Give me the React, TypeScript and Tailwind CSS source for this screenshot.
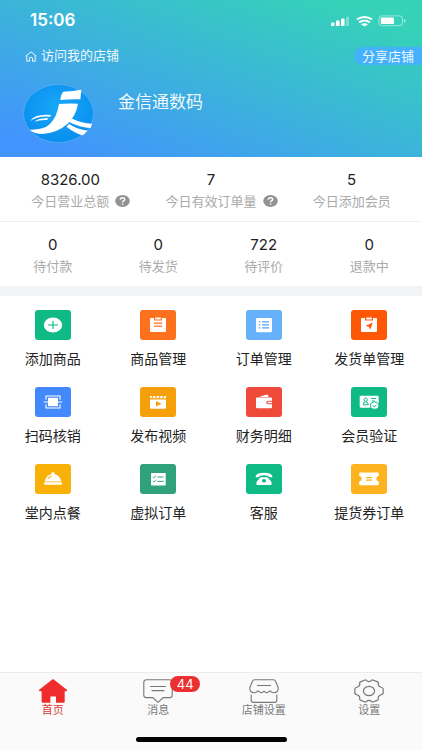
import type { ReactNode } from 'react';
import clsx from 'clsx';

const totals = [
  { value: '8326.00', label: '今日营业总额', help: true },
  { value: '7', label: '今日有效订单量', help: true },
  { value: '5', label: '今日添加会员', help: false },
];

const orders = [
  { value: '0', label: '待付款' },
  { value: '0', label: '待发货' },
  { value: '722', label: '待评价' },
  { value: '0', label: '退款中' },
];

const clipboard = (
  <path d="M11 8h3v2.6h8V8h3q1 0 1 1v12q0 1-1 1H11q-1 0-1-1V9q0-1 1-1zM15.2 7.6h5.6v1.8h-5.6z" fill="#fff" />
);

const actions: { label: string; color: string; icon: ReactNode }[] = [
  {
    label: '添加商品',
    color: 'bg-[#0fba85]',
    icon: (
      <>
        <ellipse cx="18" cy="15" rx="9.2" ry="7.6" fill="#fff" />
        <path d="M13 15h10M18 11v8" stroke="#0fba85" strokeWidth="1.2" />
      </>
    ),
  },
  {
    label: '商品管理',
    color: 'bg-[#fd701e]',
    icon: (
      <>
        {clipboard}
        <path d="M13.8 13.2h8.4M13.8 16.2h8.4" stroke="#fd701e" strokeWidth="1.2" />
      </>
    ),
  },
  {
    label: '订单管理',
    color: 'bg-[#66b0fc]',
    icon: (
      <>
        <rect x="10" y="8" width="16" height="14.3" rx="1.2" fill="#fff" />
        <path d="M12.8 11.8h1.6M12.8 14.8h1.6M12.8 17.8h1.6M16 11.8h7M16 14.8h7M16 17.8h7" stroke="#5aa5f5" strokeWidth="1.2" />
      </>
    ),
  },
  {
    label: '发货单管理',
    color: 'bg-[#fe5705]',
    icon: (
      <>
        {clipboard}
        <path d="M21.8 12.6 14.4 16l3.4.7 1.4 3z" fill="#fe5705" />
      </>
    ),
  },
  {
    label: '扫码核销',
    color: 'bg-[#4389fd]',
    icon: (
      <>
        <rect x="13" y="10.8" width="10" height="8.4" fill="#fff" />
        <path d="M11 12.8V9h14v3.8M11 17.2V21h14v-3.8M8.8 15h18.4" fill="none" stroke="#fff" strokeWidth="1.1" />
      </>
    ),
  },
  {
    label: '发布视频',
    color: 'bg-[#f59f0a]',
    icon: (
      <>
        <path d="M10 12.4h16v8.4q0 1-1 1H11q-1 0-1-1z" fill="#fff" />
        <path d="M10 9h2.4l-1.2 2.2H10zM13.6 9H16l-1.3 2.2h-2.4zM17.2 9h2.4l-1.3 2.2h-2.4zM20.8 9h2.4l-1.3 2.2h-2.4zM24.4 9H26v2.2h-2.9z" fill="#fff" />
        <path d="m16 14 5.6 2.8-5.6 2.8z" fill="#f59f0a" />
      </>
    ),
  },
  {
    label: '财务明细',
    color: 'bg-[#f04a3b]',
    icon: (
      <>
        <path d="M14.5 9.6 20.5 7.6q1-.2 1.5.7l.8 1.6h-9z" fill="#fff" />
        <path d="M11.2 10.4H25q1 0 1 1v2.4h-3.8q-2 0-2 1.7t2 1.7H26V20q0 1.2-1.2 1.2H11.2Q10 21.2 10 20v-8.4q0-1.2 1.2-1.2z" fill="#fff" />
        <path d="M22.4 14.7H26v1.6h-3.6q-.9 0-.9-.8t.9-.8z" fill="#fff" />
      </>
    ),
  },
  {
    label: '会员验证',
    color: 'bg-[#0fba85]',
    icon: (
      <>
        <rect x="8.7" y="8.7" width="19" height="12" rx="1.2" fill="#fff" />
        <ellipse cx="14.7" cy="12.7" rx="1.7" ry="1.7" fill="none" stroke="#0fba85" />
        <path d="M12.2 17.8q-.2-3 2.500-3t2.500 3zM20 11.500h5M20.800 14h3" fill="none" stroke="#0fba85" />
        <ellipse cx="23.600" cy="18.600" rx="4.200" ry="3.600" fill="#fff" stroke="#0fba85" />
        <path d="m21.800 18.600 1.400 1.200 2.400-2.200" fill="none" stroke="#0fba85" />
      </>
    ),
  },
  {
    label: '堂内点餐',
    color: 'bg-[#f9b108]',
    icon: (
      <>
        <ellipse cx="18" cy="9.4" rx="1.6" ry="1.2" fill="#fff" />
        <path d="M9.6 17.600Q11.500 10 18 10t8.400 7.600z" fill="#fff" />
        <rect x="9" y="18.300" width="18" height="2.400" rx="1" fill="#fff" />
        <path d="M13 14.600q1-1.800 3-2.400" fill="none" stroke="#f9b108" strokeWidth="1.1" strokeLinecap="round" />
      </>
    ),
  },
  {
    label: '虚拟订单',
    color: 'bg-[#30a27b]',
    icon: (
      <>
        <rect x="11" y="9" width="14.7" height="12.4" rx=".6" fill="#fff" />
        <path d="m12.800 12.800 1 .9 2-1.800M12.800 17.200l1 .9 2-1.800M17.400 13h6.200M17.400 17.400h6.200" fill="none" stroke="#30a27b" />
      </>
    ),
  },
  {
    label: '客服',
    color: 'bg-[#0fba85]',
    icon: (
      <>
        <path d="M9.600 12.200Q10.500 8.800 18 8.800t8.400 3.400q.2 1.200-.8 1.300l-2.400-.4q-.8-.2-.8-1.200-4.400-1.400-8.800 0 0 1-.8 1.200l-2.400.4q-1-.1-.8-1.300z" fill="#fff" />
        <path d="M14.600 13.300h6.800l3.800 4.200q.4.600.4 1.500v1q0 1-1 1H11.400q-1 0-1-1v-1q0-.9.400-1.500z" fill="#fff" />
        <ellipse cx="18" cy="16.700" rx="2.100" ry="1.700" fill="#0fba85" />
      </>
    ),
  },
  {
    label: '提货券订单',
    color: 'bg-[#fdb21f]',
    icon: (
      <>
        <path d="M9.500 8.400h17q1.300 0 1.300 1.200v2.200q-2.600.9-2.600 3t2.600 3V20q0 1.200-1.300 1.200h-17Q8.200 21.200 8.200 20v-2.200q2.600-.9 2.600-3t-2.600-3V9.600q0-1.200 1.300-1.200z" fill="#fff" />
        <path d="M15 13.600h6M15 16.200h6" stroke="#fdb21f" strokeWidth="1.2" />
      </>
    ),
  },
];

const tabs: { label: string; badge?: string; active?: boolean; icon: ReactNode }[] = [
  {
    label: '首页',
    active: true,
    icon: (
      <path
        d="M14.200.6q.8-.6 1.600 0l13 10.200q.8 1-.4 1.400H26.700v10.600q0 1-1.200 1H18v-6.400h-5.600v6.400H4.800q-1.200 0-1.200-1V12.200h-2Q.4 11.800 1.200 10.800z"
        fill="#f02b2b"
      />
    ),
  },
  {
    label: '消息',
    badge: '44',
    icon: (
      <g fill="none" stroke="#77777b" strokeWidth="1.1" strokeLinecap="round">
        <path d="M3.500.8h23q2.700 0 2.700 2.400v13q0 2.400-2.700 2.400h-6.300L15 23.400l-5.200-4.800H3.500Q.8 18.600.8 16.200v-13Q.8.800 3.500.8z" />
        <path d="M7.500 7.500h15M9 11.600h12" />
      </g>
    ),
  },
  {
    label: '店铺设置',
    icon: (
      <g fill="none" stroke="#77777b" strokeWidth="1.1" strokeLinecap="round">
        <path d="M5.500.8h19q1.300 0 1.900 1.200l2.800 6.500q.3 5-4.200 5.200-2.600 0-4-1.800-2.200 1.800-3.400 1.800T15 12.200q-1.400 1.500-2.600 1.500T9 11.900q-1.400 1.800-4 1.800Q.5 13.500.8 8.500L3.600 2Q4.200.8 5.500.8z" />
        <path d="M8.500 6.500h13M2.200 16v5.600q0 1.800 2.100 1.800h21.400q2.100 0 2.100-1.800V16" />
      </g>
    ),
  },
  {
    label: '设置',
    icon: (
      <g fill="none" stroke="#77777b" strokeWidth="1.2" strokeLinejoin="round">
        <path d="M11 1q.9-.3 1.400.4Q13.400 2.600 15 2.600t2.600-1.200Q18.100.7 19 1l4.600 1.900q.9.400.7 1.200-.7 3.300 3.300 4.400 1.200.2 1.400 1 .5 2.500 0 5-.2.800-1.400 1-4 1.100-3.300 4.400.2.800-.7 1.200L19 23q-.9.300-1.400-.4-1-1.200-2.600-1.200t-2.600 1.200q-.5.700-1.400.4l-4.600-1.900q-.9-.4-.7-1.200.7-3.300-3.300-4.400-1.200-.2-1.400-1-.5-2.500 0-5 .2-.8 1.400-1 4-1.100 3.300-4.400-.2-.8.7-1.200z" />
        <ellipse cx="15" cy="12" rx="5.6" ry="4.7" />
      </g>
    ),
  },
];

function StatusBar() {
  return (
    <div className="flex h-6 items-center justify-between pl-[30px] pr-4">
      <span className="text-[17px] font-semibold">15:06</span>
      <svg className="h-3 w-[78px]" viewBox="0 0 78 12" fill="#fff">
        <rect x="3" y="7.500" width="3.600" height="3.500" rx=".6" />
        <rect x="8" y="5.500" width="3.600" height="5.500" rx=".6" />
        <rect x="13" y="3.500" width="3.600" height="7.500" rx=".6" />
        <rect x="18" y="1.500" width="3" height="9.500" rx=".6" opacity=".35" />
        <path d="M36.500 11.500 33 9.200q3.500-2 7 0z" />
        <path d="M31.200 7.300q5.300-3.400 10.600 0M29 4.400q7.500-5 15 0" fill="none" stroke="#fff" strokeWidth="2" />
        <rect x="51" y=".9" width="23.500" height="9.800" rx="2.600" fill="none" stroke="#fff" opacity=".5" />
        <rect x="52.800" y="2.500" width="13.200" height="6.600" rx="1.200" />
        <path d="M76 4q1.600.4 1.600 1.800T76 7.600z" opacity=".6" />
      </svg>
    </div>
  );
}

function ShopLogo() {
  return (
    <svg className="h-[59px] w-[71px]" viewBox="69 250 213 177">
      <defs>
        <radialGradient id="logo" cx="50%" cy="40%" r="60%">
          <stop offset="0" stopColor="#17aaf9" />
          <stop offset="1" stopColor="#098dee" />
        </radialGradient>
      </defs>
      <ellipse cx="175.500" cy="338.500" rx="105" ry="87" fill="url(#logo)" stroke="#62b5f4" strokeWidth="2" />
      <g fill="#fff">
        <path d="M190 273q27-1 54-6l-3 29q-28-1-60 2 1-17 9-25z" />
        <path d="M177 310q30-3 57-1-6 36-31 60-31 28-77 31-22 0-37-13 42 1 60-16 22-22 28-61z" />
        <path d="M91 361q12-22 63-18l-4 5q-36-4-59 13z" />
        <path d="M103 363q14-12 43-10l-5 5q-22-1-38 5z" />
        <path d="M217 354q28 14 59 15l-4 13q-32-2-67-19z" />
        <path d="M207 370q27 17 56 20l-14 14q-24-6-50-26z" />
      </g>
    </svg>
  );
}

function HelpIcon() {
  return (
    <svg className="h-3 w-[15px]" viewBox="0 0 15 12">
      <ellipse cx="7.500" cy="6" rx="7.300" ry="6" fill="#929292" />
      <path d="M5.200 4.600Q5.400 2.700 7.500 2.700t2.200 1.700q0 .9-1.200 1.500-.9.500-.9 1.400" fill="none" stroke="#fff" strokeWidth="1.4" />
      <ellipse cx="7.600" cy="9" rx=".9" ry=".8" fill="#fff" />
    </svg>
  );
}

export default function App() {
  return (
    <div className="flex min-h-screen flex-col bg-white font-['Inter','Noto_Sans_CJK_SC',sans-serif] text-[#222]">
      <header className="bg-[linear-gradient(200deg,#35d2b8_10%,#4294fd_92%)] pb-[14px] pt-[9px] text-white">
        <StatusBar />
        <div className="mt-[14px] flex h-[18px] items-center justify-between pl-[25px] text-[13px]">
          <a href="#shop" className="flex items-center gap-1 text-white/90">
            <svg className="h-[11px] w-3" viewBox="0 0 12 11" fill="none" stroke="#fff" strokeWidth=".9" strokeLinejoin="round">
              <path d="M.6 5.200 6 .8l5.400 4.400M1.800 4.500v5.700H4.500V7.200q0-.8 1.500-.8t1.500.8v3h2.700V4.500" />
            </svg>
            访问我的店铺
          </a>
          <button className="h-[18px] rounded-l-full bg-[#45b0fb] px-2 text-[13px] leading-[18px] text-white/90">
            分享店铺
          </button>
        </div>
        <div className="mt-[19px] flex gap-6 pl-[23px]">
          <ShopLogo />
          <h1 className="pt-[6px] text-[17px] leading-6 text-white/95">金信通数码</h1>
        </div>
      </header>

      <main>
        <section className="grid h-[65px] grid-cols-3 border-b border-[#f0f0f1] pt-[13px] text-center">
          {totals.map((item) => (
            <div key={item.label} className="flex flex-col items-center">
              <div className="text-[15px] leading-5">{item.value}</div>
              <div className="relative mt-[1px] text-[13px] leading-5 text-[#aaa]">
                {item.label}
                {item.help && (
                  <button aria-label="说明" className="absolute left-full top-1 ml-[6px]">
                    <HelpIcon />
                  </button>
                )}
              </div>
            </div>
          ))}
        </section>

        <section className="grid h-[64px] grid-cols-4 pt-[13px] text-center">
          {orders.map((item) => (
            <div key={item.label}>
              <div className="text-[15px] leading-5">{item.value}</div>
              <div className="mt-[1px] text-[13px] leading-5 text-[#aaa]">{item.label}</div>
            </div>
          ))}
        </section>

        <div className="h-[10px] bg-[#f2f3f7]" />

        <section className="grid grid-cols-4 gap-y-[18px] pt-[14px]">
          {actions.map((item) => (
            <button key={item.label} className="flex flex-col items-center gap-[9px] text-[14px] leading-5">
              <span className={clsx('rounded-[3px]', item.color)}>
                <svg className="h-[30px] w-9" viewBox="0 0 36 30">
                  {item.icon}
                </svg>
              </span>
              {item.label}
            </button>
          ))}
        </section>
      </main>

      <nav className="mt-auto border-t border-[#ececec] bg-[#fafafa] pb-2 pt-[6px]">
        <div className="grid grid-cols-4">
          {tabs.map((tab) => (
            <a
              key={tab.label}
              href={`#${tab.label}`}
              className={clsx('flex flex-col items-center text-[11px] leading-[14px]', tab.active ? 'text-[#d93a36]' : 'text-[#7b7b7e]')}
            >
              <span className="relative">
                <svg className="h-6 w-[30px]" viewBox="0 0 30 24">
                  {tab.icon}
                </svg>
                {tab.badge && (
                  <span className="absolute -top-[3px] left-[27px] h-4 w-[30px] rounded-full bg-[#ec2f30] text-center text-[13px] leading-4 text-white">
                    {tab.badge}
                  </span>
                )}
              </span>
              {tab.label}
            </a>
          ))}
        </div>
        <div className="mx-auto mt-5 h-[5px] w-[151px] rounded-full bg-black" />
      </nav>
    </div>
  );
}
